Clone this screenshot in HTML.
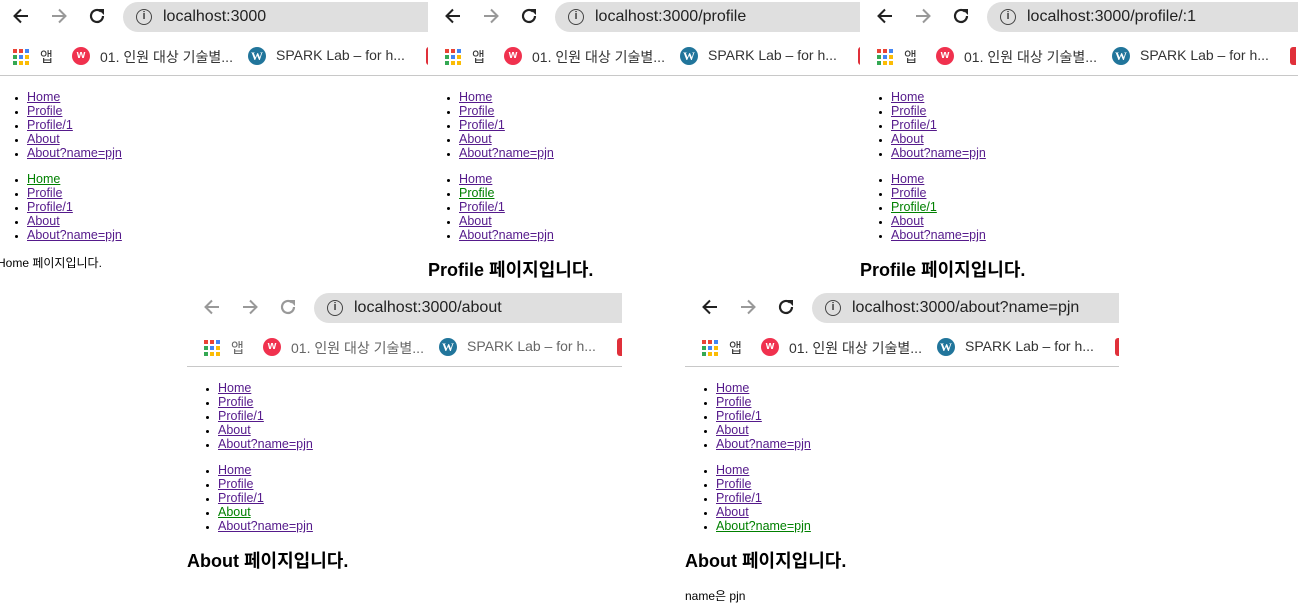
<!DOCTYPE html>
<html><head><meta charset="utf-8"><style>
*{margin:0;padding:0;box-sizing:border-box}
body{width:1298px;height:615px;background:#fff;position:relative;overflow:hidden;font-family:"Liberation Sans","Noto Sans CJK KR",sans-serif;color:#000}
.p{position:absolute;overflow:hidden;background:#fff}
.in{position:absolute;top:0;width:600px;height:330px}
.ic{position:absolute;top:6px}
.url{position:absolute;left:123px;top:2px;width:600px;height:30px;border-radius:15px;background:#dfdfdf}
.url .t{position:absolute;left:40px;top:6px;font-size:16px;color:#222}
.info{position:absolute;left:13px;top:7px;width:16px;height:16px;border:1.6px solid #444;border-radius:50%;font-size:11px;line-height:13px;text-align:center;font-weight:bold;color:#444}
.bm{position:absolute;top:47px;font-size:14px;color:#333;white-space:nowrap}
.apps{position:absolute;left:13px;top:49px;width:16px;height:16px}
.apps i{position:absolute;width:4px;height:4px}
.wz{position:absolute;left:72px;top:47px;width:18px;height:18px;border-radius:50%;background:#f0314e;color:#fff;font-size:11px;text-align:center;line-height:17px;font-weight:bold}
.wp{position:absolute;left:248px;top:47px;width:18px;height:18px;border-radius:50%;background:#21759b;color:#fff;font-size:12px;text-align:center;line-height:18px;font-family:"Liberation Serif",serif;font-weight:bold}
.red{position:absolute;left:426px;top:47px;width:6px;height:18px;background:#e0303a;border-radius:3px 0 0 3px}
.hr{position:absolute;left:-10px;top:75px;width:700px;height:1px;background:#c8c8c8}
ul{position:absolute;left:27px;list-style:disc;font-size:12.5px;line-height:14px}
ul li::marker{font-size:10px}
a{color:#551a8b;text-decoration:underline}
a.g{color:#008000}
.h{position:absolute;left:-4px;top:256px;font-size:18px;font-weight:bold;white-space:nowrap}
.s{position:absolute;font-size:12px;white-space:nowrap}
</style></head><body>

<!-- panel 1 -->
<div class="p" style="left:0;top:0;width:428px;height:290px"><div class="in" style="left:0">
<svg class="ic" style="left:11px" width="20" height="20" viewBox="0 0 20 20"><path d="M17 10H4M10 3.5L3.5 10 10 16.5" stroke="#222" stroke-width="2" fill="none"/></svg>
<svg class="ic" style="left:49px" width="20" height="20" viewBox="0 0 20 20"><path d="M3 10H16M10 3.5L16.5 10 10 16.5" stroke="#999" stroke-width="2" fill="none"/></svg>
<svg class="ic" style="left:87px" width="20" height="20" viewBox="0 0 20 20"><path d="M16 10A6 6 0 1 1 14 5.5" stroke="#222" stroke-width="2.2" fill="none"/><path d="M11 3H17V9Z" fill="#222"/></svg>
<div class="url"><div class="info">i</div><div class="t">localhost:3000</div></div>
<div class="apps"><i style="left:0;top:0;background:#ea4335"></i><i style="left:6px;top:0;background:#ea4335"></i><i style="left:12px;top:0;background:#4285f4"></i><i style="left:0;top:6px;background:#34a853"></i><i style="left:6px;top:6px;background:#4285f4"></i><i style="left:12px;top:6px;background:#fbbc05"></i><i style="left:0;top:12px;background:#34a853"></i><i style="left:6px;top:12px;background:#fbbc05"></i><i style="left:12px;top:12px;background:#fbbc05"></i></div>
<div class="bm" style="left:40px">앱</div><div class="wz">w</div><div class="bm" style="left:100px">01. 인원 대상 기술별...</div><div class="wp">W</div><div class="bm" style="left:276px">SPARK Lab – for h...</div><div class="red"></div>
<div class="hr"></div>
<ul style="top:90px"><li><a>Home</a></li><li><a>Profile</a></li><li><a>Profile/1</a></li><li><a>About</a></li><li><a>About?name=pjn</a></li></ul>
<ul style="top:172px"><li><a class="g">Home</a></li><li><a>Profile</a></li><li><a>Profile/1</a></li><li><a>About</a></li><li><a>About?name=pjn</a></li></ul>
<div class="s" style="left:-3px;top:254px">Home 페이지입니다.</div>
</div></div>

<!-- panel 2 -->
<div class="p" style="left:428px;top:0;width:432px;height:290px"><div class="in" style="left:4px">
<svg class="ic" style="left:11px" width="20" height="20" viewBox="0 0 20 20"><path d="M17 10H4M10 3.5L3.5 10 10 16.5" stroke="#222" stroke-width="2" fill="none"/></svg>
<svg class="ic" style="left:49px" width="20" height="20" viewBox="0 0 20 20"><path d="M3 10H16M10 3.5L16.5 10 10 16.5" stroke="#999" stroke-width="2" fill="none"/></svg>
<svg class="ic" style="left:87px" width="20" height="20" viewBox="0 0 20 20"><path d="M16 10A6 6 0 1 1 14 5.5" stroke="#222" stroke-width="2.2" fill="none"/><path d="M11 3H17V9Z" fill="#222"/></svg>
<div class="url"><div class="info">i</div><div class="t">localhost:3000/profile</div></div>
<div class="apps"><i style="left:0;top:0;background:#ea4335"></i><i style="left:6px;top:0;background:#ea4335"></i><i style="left:12px;top:0;background:#4285f4"></i><i style="left:0;top:6px;background:#34a853"></i><i style="left:6px;top:6px;background:#4285f4"></i><i style="left:12px;top:6px;background:#fbbc05"></i><i style="left:0;top:12px;background:#34a853"></i><i style="left:6px;top:12px;background:#fbbc05"></i><i style="left:12px;top:12px;background:#fbbc05"></i></div>
<div class="bm" style="left:40px">앱</div><div class="wz">w</div><div class="bm" style="left:100px">01. 인원 대상 기술별...</div><div class="wp">W</div><div class="bm" style="left:276px">SPARK Lab – for h...</div><div class="red"></div>
<div class="hr"></div>
<ul style="top:90px"><li><a>Home</a></li><li><a>Profile</a></li><li><a>Profile/1</a></li><li><a>About</a></li><li><a>About?name=pjn</a></li></ul>
<ul style="top:172px"><li><a>Home</a></li><li><a class="g">Profile</a></li><li><a>Profile/1</a></li><li><a>About</a></li><li><a>About?name=pjn</a></li></ul>
<div class="h">Profile 페이지입니다.</div>
</div></div>

<!-- panel 3 -->
<div class="p" style="left:860px;top:0;width:438px;height:290px"><div class="in" style="left:4px">
<svg class="ic" style="left:11px" width="20" height="20" viewBox="0 0 20 20"><path d="M17 10H4M10 3.5L3.5 10 10 16.5" stroke="#222" stroke-width="2" fill="none"/></svg>
<svg class="ic" style="left:49px" width="20" height="20" viewBox="0 0 20 20"><path d="M3 10H16M10 3.5L16.5 10 10 16.5" stroke="#999" stroke-width="2" fill="none"/></svg>
<svg class="ic" style="left:87px" width="20" height="20" viewBox="0 0 20 20"><path d="M16 10A6 6 0 1 1 14 5.5" stroke="#222" stroke-width="2.2" fill="none"/><path d="M11 3H17V9Z" fill="#222"/></svg>
<div class="url"><div class="info">i</div><div class="t">localhost:3000/profile/:1</div></div>
<div class="apps"><i style="left:0;top:0;background:#ea4335"></i><i style="left:6px;top:0;background:#ea4335"></i><i style="left:12px;top:0;background:#4285f4"></i><i style="left:0;top:6px;background:#34a853"></i><i style="left:6px;top:6px;background:#4285f4"></i><i style="left:12px;top:6px;background:#fbbc05"></i><i style="left:0;top:12px;background:#34a853"></i><i style="left:6px;top:12px;background:#fbbc05"></i><i style="left:12px;top:12px;background:#fbbc05"></i></div>
<div class="bm" style="left:40px">앱</div><div class="wz">w</div><div class="bm" style="left:100px">01. 인원 대상 기술별...</div><div class="wp">W</div><div class="bm" style="left:276px">SPARK Lab – for h...</div><div class="red"></div>
<div class="hr"></div>
<ul style="top:90px"><li><a>Home</a></li><li><a>Profile</a></li><li><a>Profile/1</a></li><li><a>About</a></li><li><a>About?name=pjn</a></li></ul>
<ul style="top:172px"><li><a>Home</a></li><li><a>Profile</a></li><li><a class="g">Profile/1</a></li><li><a>About</a></li><li><a>About?name=pjn</a></li></ul>
<div class="h">Profile 페이지입니다.</div>
</div></div>

<!-- panel 4 -->
<div class="p" style="left:187px;top:291px;width:435px;height:324px"><div class="in" style="left:4px">
<svg class="ic" style="left:11px" width="20" height="20" viewBox="0 0 20 20"><path d="M17 10H4M10 3.5L3.5 10 10 16.5" stroke="#999" stroke-width="2" fill="none"/></svg>
<svg class="ic" style="left:49px" width="20" height="20" viewBox="0 0 20 20"><path d="M3 10H16M10 3.5L16.5 10 10 16.5" stroke="#999" stroke-width="2" fill="none"/></svg>
<svg class="ic" style="left:87px" width="20" height="20" viewBox="0 0 20 20"><path d="M16 10A6 6 0 1 1 14 5.5" stroke="#999" stroke-width="2.2" fill="none"/><path d="M11 3H17V9Z" fill="#999"/></svg>
<div class="url"><div class="info">i</div><div class="t">localhost:3000/about</div></div>
<div class="apps"><i style="left:0;top:0;background:#ea4335"></i><i style="left:6px;top:0;background:#ea4335"></i><i style="left:12px;top:0;background:#4285f4"></i><i style="left:0;top:6px;background:#34a853"></i><i style="left:6px;top:6px;background:#4285f4"></i><i style="left:12px;top:6px;background:#fbbc05"></i><i style="left:0;top:12px;background:#34a853"></i><i style="left:6px;top:12px;background:#fbbc05"></i><i style="left:12px;top:12px;background:#fbbc05"></i></div>
<div class="bm" style="left:40px;color:#666">앱</div><div class="wz">w</div><div class="bm" style="left:100px;color:#666">01. 인원 대상 기술별...</div><div class="wp">W</div><div class="bm" style="left:276px;color:#666">SPARK Lab – for h...</div><div class="red"></div>
<div class="hr"></div>
<ul style="top:90px"><li><a>Home</a></li><li><a>Profile</a></li><li><a>Profile/1</a></li><li><a>About</a></li><li><a>About?name=pjn</a></li></ul>
<ul style="top:172px"><li><a>Home</a></li><li><a>Profile</a></li><li><a>Profile/1</a></li><li><a class="g">About</a></li><li><a>About?name=pjn</a></li></ul>
<div class="h">About 페이지입니다.</div>
</div></div>

<!-- panel 5 -->
<div class="p" style="left:685px;top:291px;width:434px;height:324px"><div class="in" style="left:4px">
<svg class="ic" style="left:11px" width="20" height="20" viewBox="0 0 20 20"><path d="M17 10H4M10 3.5L3.5 10 10 16.5" stroke="#222" stroke-width="2" fill="none"/></svg>
<svg class="ic" style="left:49px" width="20" height="20" viewBox="0 0 20 20"><path d="M3 10H16M10 3.5L16.5 10 10 16.5" stroke="#999" stroke-width="2" fill="none"/></svg>
<svg class="ic" style="left:87px" width="20" height="20" viewBox="0 0 20 20"><path d="M16 10A6 6 0 1 1 14 5.5" stroke="#222" stroke-width="2.2" fill="none"/><path d="M11 3H17V9Z" fill="#222"/></svg>
<div class="url"><div class="info">i</div><div class="t">localhost:3000/about?name=pjn</div></div>
<div class="apps"><i style="left:0;top:0;background:#ea4335"></i><i style="left:6px;top:0;background:#ea4335"></i><i style="left:12px;top:0;background:#4285f4"></i><i style="left:0;top:6px;background:#34a853"></i><i style="left:6px;top:6px;background:#4285f4"></i><i style="left:12px;top:6px;background:#fbbc05"></i><i style="left:0;top:12px;background:#34a853"></i><i style="left:6px;top:12px;background:#fbbc05"></i><i style="left:12px;top:12px;background:#fbbc05"></i></div>
<div class="bm" style="left:40px">앱</div><div class="wz">w</div><div class="bm" style="left:100px">01. 인원 대상 기술별...</div><div class="wp">W</div><div class="bm" style="left:276px">SPARK Lab – for h...</div><div class="red"></div>
<div class="hr"></div>
<ul style="top:90px"><li><a>Home</a></li><li><a>Profile</a></li><li><a>Profile/1</a></li><li><a>About</a></li><li><a>About?name=pjn</a></li></ul>
<ul style="top:172px"><li><a>Home</a></li><li><a>Profile</a></li><li><a>Profile/1</a></li><li><a>About</a></li><li><a class="g">About?name=pjn</a></li></ul>
<div class="h">About 페이지입니다.</div>
<div class="s" style="left:-4px;top:296px">name은 pjn</div>
</div></div>

</body></html>
